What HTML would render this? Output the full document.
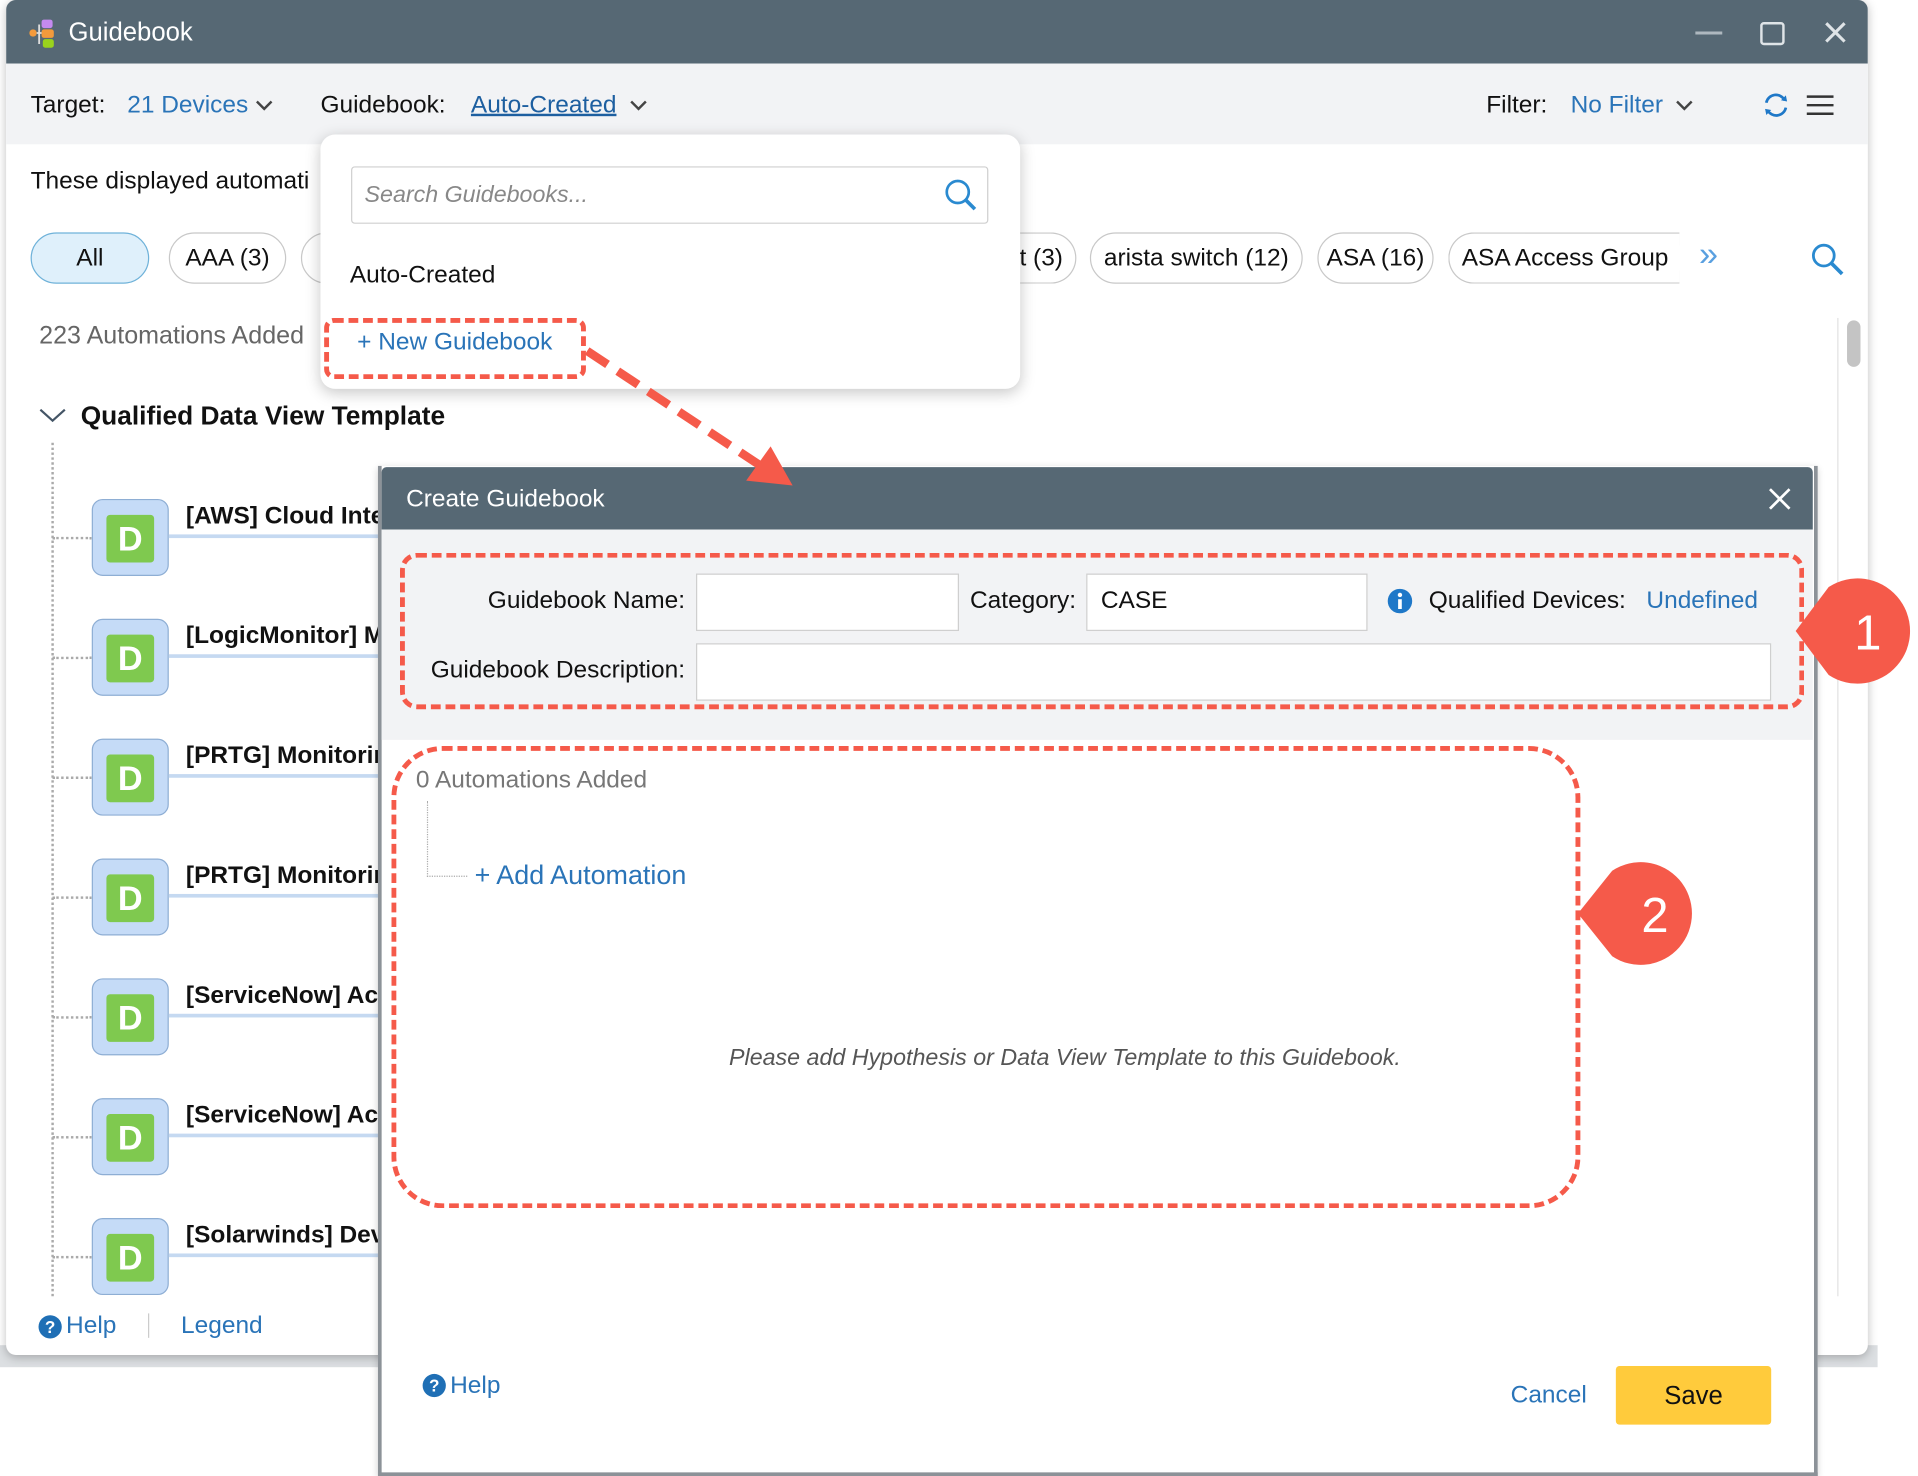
<!DOCTYPE html>
<html><head><meta charset="utf-8"><style>
*{box-sizing:border-box;margin:0;padding:0}
html,body{width:1918px;height:1476px;overflow:hidden;background:#fff;font-family:"Liberation Sans",sans-serif;color:#111}
#s{position:absolute;left:0;top:0;width:1568px;height:1207px;transform:scale(1.2232,1.2229);transform-origin:0 0}
.a{position:absolute;white-space:nowrap}
.blue{color:#2a74b8}
.chip{position:absolute;top:190px;height:42px;border:1.5px solid #c8c8c8;border-radius:21px;font-size:20px;line-height:40px;text-align:center;background:#fff}
.ico{position:absolute;left:75px;width:63px;height:63px;background:#c5dbf7;border:1px solid #8eaed4;border-radius:9px}
.ico b{position:absolute;left:11px;top:12px;width:39px;height:39px;background:#7fc94f;border-radius:3px;color:#fff;font-size:28px;line-height:39px;text-align:center;font-weight:bold}
.row{position:absolute;left:152px;font-size:20px;font-weight:bold}
.ln{position:absolute;left:138px;width:175px;height:3px;background:#c5d9f1}
.hd{position:absolute;left:43px;width:32px;border-top:2px dotted #aaa}
.inp{position:absolute;background:#fff;border:1.5px solid #cfcfcf}
</style></head><body><div id="s">
<div class="a" style="left:0;top:1100px;width:1535px;height:18px;background:#dcdfe2"></div>
<div class="a" style="left:5px;top:0;width:1522px;height:1108px;background:#fff;border-radius:8px;box-shadow:0 2px 8px rgba(0,0,0,.25);overflow:hidden">
 <div class="a" style="left:0;top:0;width:1522px;height:52px;background:#566874"></div>
 <div class="a" style="left:0;top:52px;width:1522px;height:66px;background:#f2f3f5"></div>
</div>
<svg class="a" style="left:22px;top:14px" width="32" height="28"><rect x="12" y="2" width="9" height="7" rx="2" fill="#c58af0"/><rect x="12" y="10" width="10" height="7" rx="2" fill="#f39a3c"/><rect x="13" y="18" width="9" height="7" rx="2" fill="#9ad31d"/><circle cx="5" cy="13" r="3" fill="#f39a3c"/><path d="M8 13H12M10 6V22" stroke="#ddd" stroke-width="1.5" fill="none"/></svg>
<div class="a" style="left:56px;top:15px;font-size:21px;color:#fff">Guidebook</div>
<svg class="a" style="left:1380px;top:14px" width="135" height="26"><path d="M6 13H28" stroke="#aeb8bf" stroke-width="2.5"/><rect x="60" y="5" width="18" height="17" rx="2" stroke="#dfe4e7" stroke-width="2" fill="none"/><path d="M113 5L128 20M128 5L113 20" stroke="#dfe4e7" stroke-width="2.5"/></svg>
<div class="a" style="left:25px;top:75px;font-size:20px">Target:</div>
<div class="a blue" style="left:104px;top:75px;font-size:20px">21 Devices</div>
<svg class="a" style="left:209px;top:81px" width="14" height="10"><path d="M1 2L7 8L13 2" stroke="#444" stroke-width="2" fill="none"/></svg>
<div class="a" style="left:262px;top:75px;font-size:20px">Guidebook:</div>
<div class="a" style="left:385px;top:75px;font-size:20px;color:#1d5fa0;text-decoration:underline">Auto-Created</div>
<svg class="a" style="left:515px;top:81px" width="14" height="10"><path d="M1 2L7 8L13 2" stroke="#444" stroke-width="2" fill="none"/></svg>
<div class="a" style="left:1215px;top:75px;font-size:20px">Filter:</div>
<div class="a blue" style="left:1284px;top:75px;font-size:20px">No Filter</div>
<svg class="a" style="left:1370px;top:81px" width="14" height="10"><path d="M1 2L7 8L13 2" stroke="#444" stroke-width="2" fill="none"/></svg>
<svg class="a" style="left:1440px;top:74px" width="24" height="24"><path d="M4 10A8 8 0 0 1 19 8M20 14A8 8 0 0 1 5 16" stroke="#1f78c8" stroke-width="2.2" fill="none"/><path d="M16 8L21 9L20 4Z M8 16L3 15L4 20Z" fill="#1f78c8"/></svg>
<svg class="a" style="left:1477px;top:76px" width="22" height="20"><path d="M0 3H22M0 10H22M0 17H22" stroke="#333" stroke-width="2"/></svg>
<div class="a" style="left:25px;top:137px;font-size:20px">These displayed automati</div>
<div class="chip" style="left:25px;width:97px;background:#dff0fb;border-color:#6fb2d9">All</div>
<div class="chip" style="left:138px;width:96px">AAA (3)</div>
<div class="chip" style="left:246px;width:60px"></div>
<div class="chip" style="left:800px;width:80px;border-left:none;border-radius:0 21px 21px 0;text-align:right;padding-right:10px">t (3)</div>
<div class="chip" style="left:891px;width:174px">arista switch (12)</div>
<div class="chip" style="left:1077px;width:95px">ASA (16)</div>
<div class="chip" style="left:1184px;width:189px;border-right:none;border-radius:21px 0 0 21px;overflow:hidden;text-align:left;padding-left:10px">ASA Access Group (1</div>
<div class="a blue" style="left:1389px;top:192px;font-size:28px;color:#5aa0e0">»</div>
<svg class="a" style="left:1480px;top:198px" width="30" height="30"><circle cx="11" cy="11" r="8.5" stroke="#2a8ad0" stroke-width="2.3" fill="none"/><path d="M17 17L26 26" stroke="#2a8ad0" stroke-width="3"/></svg>
<div class="a" style="left:32px;top:263px;font-size:20.5px;color:#666">223 Automations Added</div>
<svg class="a" style="left:31px;top:333px" width="24" height="14"><path d="M2 2L12 11L22 2" stroke="#456" stroke-width="1.8" fill="none"/></svg>
<div class="a" style="left:66px;top:328px;font-size:21.5px;font-weight:bold">Qualified Data View Template</div>
<div class="a" style="left:42px;top:362px;height:698px;border-left:2px dotted #aaa"></div>
<div class="ico" style="top:408px"><b>D</b></div><div class="row" style="top:411px">[AWS] Cloud Inte</div><div class="ln" style="top:437px"></div><div class="hd" style="top:439px"></div>
<div class="ico" style="top:506px"><b>D</b></div><div class="row" style="top:509px">[LogicMonitor] M</div><div class="ln" style="top:535px"></div><div class="hd" style="top:537px"></div>
<div class="ico" style="top:604px"><b>D</b></div><div class="row" style="top:607px">[PRTG] Monitorir</div><div class="ln" style="top:633px"></div><div class="hd" style="top:635px"></div>
<div class="ico" style="top:702px"><b>D</b></div><div class="row" style="top:705px">[PRTG] Monitorir</div><div class="ln" style="top:731px"></div><div class="hd" style="top:733px"></div>
<div class="ico" style="top:800px"><b>D</b></div><div class="row" style="top:803px">[ServiceNow] Act</div><div class="ln" style="top:829px"></div><div class="hd" style="top:831px"></div>
<div class="ico" style="top:898px"><b>D</b></div><div class="row" style="top:901px">[ServiceNow] Act</div><div class="ln" style="top:927px"></div><div class="hd" style="top:929px"></div>
<div class="ico" style="top:996px"><b>D</b></div><div class="row" style="top:999px">[Solarwinds] Dev</div><div class="ln" style="top:1025px"></div><div class="hd" style="top:1027px"></div>
<svg class="a" style="left:31px;top:1075px" width="20" height="20"><circle cx="10" cy="10" r="9.5" fill="#1f6fb5"/><text x="10" y="15" font-size="14" font-weight="bold" fill="#fff" text-anchor="middle" font-family="Liberation Sans">?</text></svg>
<div class="a blue" style="left:54px;top:1073px;font-size:20px">Help</div>
<div class="a" style="left:121px;top:1074px;width:1px;height:20px;background:#ccc"></div>
<div class="a blue" style="left:148px;top:1073px;font-size:20px">Legend</div>
<div class="a" style="left:1502px;top:260px;width:1px;height:800px;background:#e2e2e2"></div>
<div class="a" style="left:1510px;top:262px;width:11px;height:38px;background:#c4c4c4;border-radius:6px"></div>
<div class="a" style="left:262px;top:110px;width:572px;height:208px;background:#fff;border-radius:12px;box-shadow:0 3px 12px rgba(0,0,0,.22)"></div>
<div class="inp" style="left:287px;top:136px;width:521px;height:47px;border-radius:3px"></div>
<div class="a" style="left:298px;top:149px;font-size:19px;font-style:italic;color:#888">Search Guidebooks...</div>
<svg class="a" style="left:771px;top:145px" width="30" height="30"><circle cx="12" cy="12" r="9" stroke="#2a8ad0" stroke-width="2.2" fill="none"/><path d="M18 18L26 26" stroke="#2a8ad0" stroke-width="3"/></svg>
<div class="a" style="left:286px;top:214px;font-size:20px">Auto-Created</div>
<div class="a blue" style="left:292px;top:269px;font-size:20px">+ New Guidebook</div>
<div class="a" style="left:265px;top:260px;width:214px;height:50px;border:4px dashed #f55a4a;border-radius:8px"></div>
<div class="a" style="left:309px;top:381px;width:1177px;height:826px;background:#fff;border:3px solid #8c9298;border-top:none;box-shadow:0 2px 6px rgba(0,0,0,.2)"></div>
<div class="a" style="left:312px;top:382px;width:1170px;height:51px;background:#566874;border-radius:4px 4px 0 0"></div>
<div class="a" style="left:332px;top:397px;font-size:20px;color:#fff">Create Guidebook</div>
<svg class="a" style="left:1445px;top:398px" width="20" height="20"><path d="M2 2L18 18M18 2L2 18" stroke="#fff" stroke-width="2.2"/></svg>
<div class="a" style="left:312px;top:433px;width:1170px;height:172px;background:#f2f3f5"></div>
<div class="a" style="left:330px;top:480px;width:230px;text-align:right;font-size:20px">Guidebook Name:</div>
<div class="inp" style="left:569px;top:469px;width:215px;height:47px"></div>
<div class="a" style="left:793px;top:480px;font-size:20px">Category:</div>
<div class="inp" style="left:888px;top:469px;width:230px;height:47px"></div>
<div class="a" style="left:900px;top:480px;font-size:20px">CASE</div>
<svg class="a" style="left:1134px;top:481px" width="21" height="21"><circle cx="10.5" cy="10.5" r="10" fill="#1f78c8"/><rect x="9" y="9" width="3" height="8" fill="#fff"/><circle cx="10.5" cy="5.5" r="1.8" fill="#fff"/></svg>
<div class="a" style="left:1168px;top:480px;font-size:20px">Qualified Devices:</div>
<div class="a blue" style="left:1346px;top:480px;font-size:20px">Undefined</div>
<div class="a" style="left:330px;top:537px;width:230px;text-align:right;font-size:20px">Guidebook Description:</div>
<div class="inp" style="left:569px;top:526px;width:879px;height:47px"></div>
<div class="a" style="left:327px;top:452px;width:1148px;height:128px;border:4px dashed #f55a4a;border-radius:14px"></div>
<div class="a" style="left:340px;top:627px;font-size:20px;color:#777">0 Automations Added</div>
<div class="a" style="left:349px;top:655px;height:62px;border-left:1.5px dotted #aaa"></div>
<div class="a" style="left:349px;top:716px;width:33px;border-top:1.5px dotted #aaa"></div>
<div class="a blue" style="left:388px;top:703px;font-size:22px">+ Add Automation</div>
<div class="a" style="left:596px;top:855px;font-size:19px;font-style:italic;color:#555">Please add Hypothesis or Data View Template to this Guidebook.</div>
<div class="a" style="left:320px;top:610px;width:972px;height:378px;border:4px dashed #f55a4a;border-radius:42px"></div>
<svg class="a" style="left:345px;top:1123px" width="20" height="20"><circle cx="10" cy="10" r="9.5" fill="#1f6fb5"/><text x="10" y="15" font-size="14" font-weight="bold" fill="#fff" text-anchor="middle" font-family="Liberation Sans">?</text></svg>
<div class="a blue" style="left:368px;top:1122px;font-size:20px">Help</div>
<div class="a blue" style="left:1235px;top:1130px;font-size:20px">Cancel</div>
<div class="a" style="left:1321px;top:1117px;width:127px;height:48px;background:#ffcb3c;border-radius:3px;font-size:21px;line-height:50px;text-align:center">Save</div>
<svg class="a" style="left:0;top:0" width="1568" height="1207">
<path d="M480 287L625 383" stroke="#f55a4a" stroke-width="7" stroke-dasharray="20 10" fill="none"/>
<path d="M648 397L610 393L630 365Z" fill="#f55a4a"/>
<path d="M1468 516L1495 480A43 43 0 1 1 1495 552Z" fill="#f55a4a"/>
<text x="1527" y="531" font-size="40" fill="#fff" text-anchor="middle" font-family="Liberation Sans">1</text>
<path d="M1290 747L1318 712A42 42 0 1 1 1318 782Z" fill="#f55a4a"/>
<text x="1353" y="762" font-size="40" fill="#fff" text-anchor="middle" font-family="Liberation Sans">2</text>
</svg>
</div></body></html>
